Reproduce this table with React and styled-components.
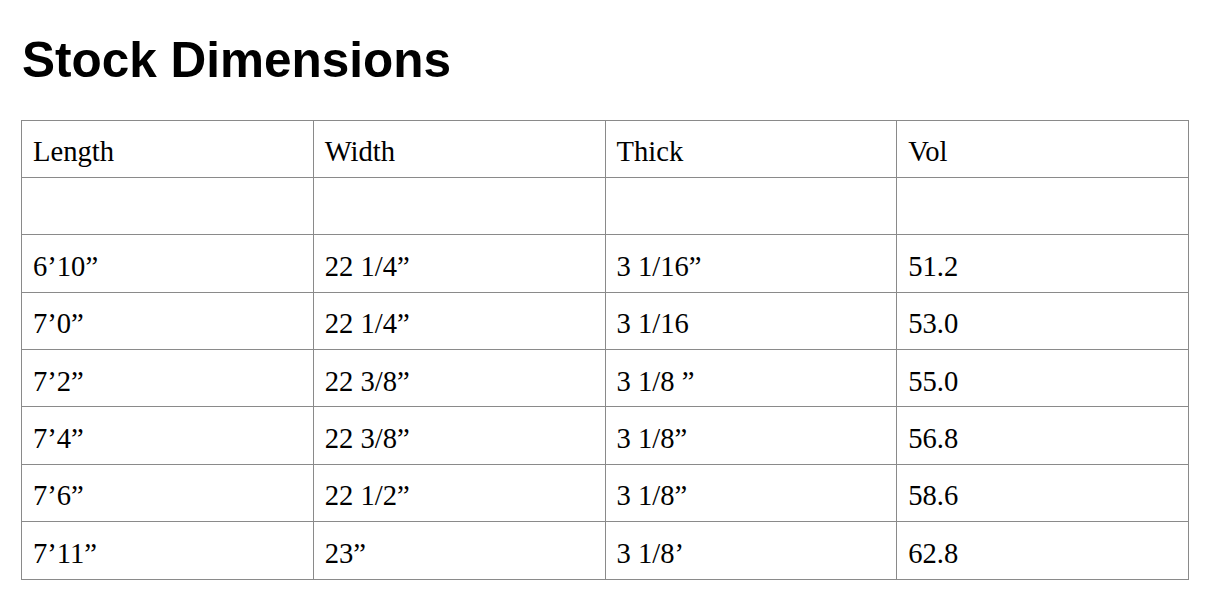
import React from "react";
import styled, { createGlobalStyle } from "styled-components";

const GlobalStyle = createGlobalStyle`
  html, body {
    margin: 0;
    padding: 0;
    background: #ffffff;
  }
`;

const rows = [
  ["Length", "Width", "Thick", "Vol"],
  ["", "", "", ""],
  ["6\u201910\u201d", "22 1/4\u201d", "3 1/16\u201d", "51.2"],
  ["7\u20190\u201d", "22 1/4\u201d", "3 1/16", "53.0"],
  ["7\u20192\u201d", "22 3/8\u201d", "3 1/8 \u201d", "55.0"],
  ["7\u20194\u201d", "22 3/8\u201d", "3 1/8\u201d", "56.8"],
  ["7\u20196\u201d", "22 1/2\u201d", "3 1/8\u201d", "58.6"],
  ["7\u201911\u201d", "23\u201d", "3 1/8\u2019", "62.8"],
];

const Page = styled.div`
  padding: 31px 18px 0 21px;
`;

const Title = styled.h1`
  margin: 0 0 31px 1px;
  font-family: "Liberation Sans", Arial, sans-serif;
  font-weight: 700;
  font-size: 49.5px;
  line-height: 57.5px;
  color: #000;
`;

const Table = styled.table`
  width: 1168px;
  border-collapse: collapse;
  table-layout: fixed;
  font-family: "Liberation Serif", "Times New Roman", serif;
  font-size: 28.6px;
  color: #000;
`;

const Row = styled.tr`
  height: 57.375px;
`;

const Cell = styled.td`
  border: 1px solid #8a8a8a;
  padding: 6px 11px 0 11px;
  vertical-align: middle;
  white-space: pre;
  line-height: 33px;
`;

export default function App() {
  return (
    <>
      <GlobalStyle />
      <Page>
        <Title>Stock Dimensions</Title>
        <Table>
          <tbody>
            {rows.map((r, i) => (
              <Row key={i}>
                {r.map((c, j) => (
                  <Cell key={j}>{c}</Cell>
                ))}
              </Row>
            ))}
          </tbody>
        </Table>
      </Page>
    </>
  );
}
